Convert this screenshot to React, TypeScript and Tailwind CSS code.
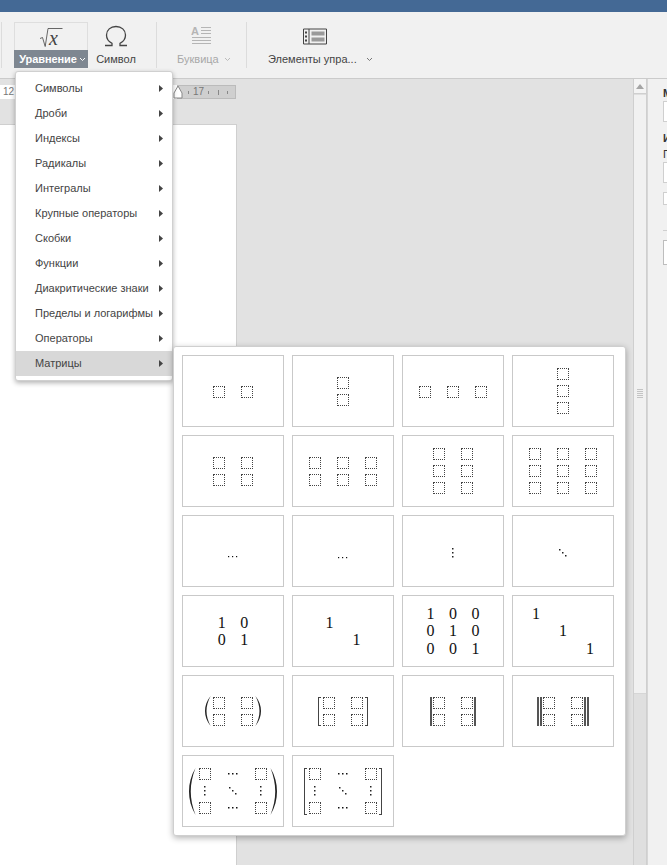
import type { ReactNode } from 'react';

const menuItems = [
  'Символы',
  'Дроби',
  'Индексы',
  'Радикалы',
  'Интегралы',
  'Крупные операторы',
  'Скобки',
  'Функции',
  'Диакритические знаки',
  'Пределы и логарифмы',
  'Операторы',
  'Матрицы',
];

// dotted box that stands in for an empty matrix slot
function Ph() {
  return <span className="block w-3 h-3 border border-dotted border-[#444]" />;
}

function Chevron({ color = '#777' }: { color?: string }) {
  return (
    <svg width="7" height="5" viewBox="0 0 7 5" fill="none" className="shrink-0">
      <path d="M1 1l2.5 2.5L6 1" stroke={color} strokeWidth="1" />
    </svg>
  );
}

function DotsH({ small }: { small?: boolean }) {
  const s = small ? 1.2 : 1.5;
  return (
    <svg width="12" height="12" viewBox="0 0 12 12" className="block" fill="#111">
      <rect x="1" y="5" width={s} height={s} />
      <rect x="5" y="5" width={s} height={s} />
      <rect x="9" y="5" width={s} height={s} />
    </svg>
  );
}

function DotsV() {
  return (
    <svg width="12" height="12" viewBox="0 0 12 12" className="block" fill="#222">
      <rect x="5" y="1" width="1.5" height="1.5" />
      <rect x="5" y="5" width="1.5" height="1.5" />
      <rect x="5" y="9" width="1.5" height="1.5" />
    </svg>
  );
}

function DotsD() {
  return (
    <svg width="12" height="12" viewBox="0 0 12 12" className="block" fill="#222">
      <rect x="2" y="2" width="1.5" height="1.5" />
      <rect x="5" y="5" width="1.5" height="1.5" />
      <rect x="8" y="8" width="1.5" height="1.5" />
    </svg>
  );
}

function PhGrid({ cols, rows }: { cols: number; rows: number }) {
  const cells = Array.from({ length: cols * rows });
  return (
    <div
      className={
        cols === 1
          ? 'grid grid-cols-1 gap-y-[5px]'
          : cols === 2
            ? 'grid grid-cols-2 gap-x-4 gap-y-[5px]'
            : 'grid grid-cols-3 gap-x-4 gap-y-[5px]'
      }
    >
      {cells.map((_, i) => (
        <Ph key={i} />
      ))}
    </div>
  );
}

// 3x3 matrix with dots between the corners
function DotsGrid() {
  return (
    <div className="grid grid-cols-3 gap-x-4 gap-y-[5px]">
      <Ph />
      <DotsH />
      <Ph />
      <DotsV />
      <DotsD />
      <DotsV />
      <Ph />
      <DotsH />
      <Ph />
    </div>
  );
}

function Digits({ rows, wide }: { rows: string[][]; wide?: boolean }) {
  return (
    <div className="font-['Liberation_Serif',serif] text-base text-[#111]">
      {rows.map((row, i) => (
        <div key={i} className="flex h-[17.5px] leading-[17.5px]">
          {row.map((d, j) => (
            <span key={j} className={wide ? 'w-[27px] text-center' : 'w-[22.5px] text-center'}>
              {d}
            </span>
          ))}
        </div>
      ))}
    </div>
  );
}

function Paren({ tall, right }: { tall?: boolean; right?: boolean }) {
  return (
    <svg
      width={tall ? 7 : 6}
      height={tall ? 47 : 30}
      viewBox="0 0 6 30"
      preserveAspectRatio="none"
      className={right ? 'block -scale-x-100' : 'block'}
      fill="#222"
    >
      <path d="M5.6 0C1.6 5 0 10 0 15s1.6 10 5.6 15C3 25 1.5 20 1.5 15S3 5 5.6 0z" />
    </svg>
  );
}

function Bracket({ tall, right }: { tall?: boolean; right?: boolean }) {
  const h = tall ? 'h-[47px]' : 'h-[29px]';
  return right ? (
    <span className={`block w-[3px] ${h} border-y border-r-[1.5px] border-[#444]`} />
  ) : (
    <span className={`block w-[3px] ${h} border-y border-l-[1.5px] border-[#444]`} />
  );
}

function Bar() {
  return <span className="block w-[2px] h-[29px] bg-[#555]" />;
}

function Cell({ children }: { children?: ReactNode }) {
  return (
    <div className="flex items-center justify-center bg-white border border-[#c9c9c9]">
      {children}
    </div>
  );
}

function MatrixPopover() {
  return (
    <div className="absolute left-[173px] top-[346px] w-[453px] h-[490px] bg-white border border-[#cfcfcf] rounded-[3px] shadow-[0_2px_6px_rgba(0,0,0,0.3)] p-2 grid grid-cols-[repeat(4,102px)] auto-rows-[72px] gap-2">
      <Cell><div className="pt-px"><PhGrid cols={2} rows={1} /></div></Cell>
      <Cell><PhGrid cols={1} rows={2} /></Cell>
      <Cell><div className="pt-px"><PhGrid cols={3} rows={1} /></div></Cell>
      <Cell><PhGrid cols={1} rows={3} /></Cell>

      <Cell><PhGrid cols={2} rows={2} /></Cell>
      <Cell><PhGrid cols={3} rows={2} /></Cell>
      <Cell><PhGrid cols={2} rows={3} /></Cell>
      <Cell><PhGrid cols={3} rows={3} /></Cell>

      <Cell><div className="pt-[12px]"><DotsH small /></div></Cell>
      <Cell><div className="pt-[14px]"><DotsH small /></div></Cell>
      <Cell><div className="pt-[3px]"><DotsV /></div></Cell>
      <Cell><div className="pt-[3px]"><DotsD /></div></Cell>

      <Cell><Digits rows={[['1', '0'], ['0', '1']]} /></Cell>
      <Cell><Digits wide rows={[['1', ''], ['', '1']]} /></Cell>
      <Cell><Digits rows={[['1', '0', '0'], ['0', '1', '0'], ['0', '0', '1']]} /></Cell>
      <Cell><Digits wide rows={[['1', '', ''], ['', '1', ''], ['', '', '1']]} /></Cell>

      <Cell>
        <div className="flex items-center gap-[2px]">
          <Paren />
          <PhGrid cols={2} rows={2} />
          <Paren right />
        </div>
      </Cell>
      <Cell>
        <div className="flex items-center gap-[2px]">
          <Bracket />
          <PhGrid cols={2} rows={2} />
          <Bracket right />
        </div>
      </Cell>
      <Cell>
        <div className="flex items-center gap-[1px]">
          <Bar />
          <PhGrid cols={2} rows={2} />
          <Bar />
        </div>
      </Cell>
      <Cell>
        <div className="flex items-center gap-[1px]">
          <div className="flex gap-px"><Bar /><Bar /></div>
          <PhGrid cols={2} rows={2} />
          <div className="flex gap-px"><Bar /><Bar /></div>
        </div>
      </Cell>

      <Cell>
        <div className="flex items-center gap-[3px]">
          <Paren tall />
          <DotsGrid />
          <Paren tall right />
        </div>
      </Cell>
      <Cell>
        <div className="flex items-center gap-[2px]">
          <Bracket tall />
          <DotsGrid />
          <Bracket tall right />
        </div>
      </Cell>
    </div>
  );
}

function EquationMenu() {
  return (
    <div className="absolute left-[15px] top-[71px] w-[158px] h-[310px] bg-white border border-[#d0d0d0] rounded-[3px] shadow-[0_2px_5px_rgba(0,0,0,0.3)] py-1">
      {menuItems.map((item) => (
        <div
          key={item}
          className={
            item === 'Матрицы'
              ? 'flex items-center justify-between h-[25px] pl-[19px] pr-[9px] bg-[#d8d8d8]'
              : 'flex items-center justify-between h-[25px] pl-[19px] pr-[9px]'
          }
        >
          <span className="whitespace-nowrap">{item}</span>
          <svg width="4" height="7" viewBox="0 0 4 7" className="shrink-0" fill="#444">
            <path d="M0 0l4 3.5L0 7z" />
          </svg>
        </div>
      ))}
    </div>
  );
}

function Divider() {
  return <div className="w-px h-[46px] bg-[#dcdcdc] shrink-0" />;
}

function Toolbar() {
  return (
    <div className="flex items-start h-[67px] pt-[10px] bg-[#f1f1f1] border-b border-[#cbcbcb] shrink-0">
      <div className="ml-px"><Divider /></div>

      {/* equation button, shown as open */}
      <div className="ml-3 w-[74px] shrink-0">
        <div className="flex items-center justify-center h-[28px] border border-b-0 border-[#dedede]">
          <svg width="24" height="22" viewBox="0 0 24 22" fill="none">
            <path d="M1 12.5l2.5-1 2.7 9L9 2.5h14.5" stroke="#444" strokeWidth="0.8" />
            <text x="10" y="19" fontFamily="Liberation Serif" fontStyle="italic" fontSize="20" fill="#444">x</text>
          </svg>
        </div>
        <div className="flex items-center justify-center gap-[2px] h-[18px] pl-[3px] bg-[#7e8791] text-white font-bold tracking-[-0.1px]">
          <span>Уравнение</span>
          <Chevron color="#fff" />
        </div>
      </div>

      <div className="w-[56px] ml-0 shrink-0">
        <div className="flex items-center justify-center h-[28px]">
          <svg width="24" height="22" viewBox="0 0 24 22" fill="none">
            <path
              d="M1 20.5h7v-2.2C4.6 16.6 2.5 13.5 2.5 10 2.5 5 6.5 1.5 12 1.5S21.5 5 21.5 10c0 3.5-2.1 6.6-5.5 8.3v2.2h7"
              stroke="#444"
              strokeWidth="1.3"
            />
          </svg>
        </div>
        <div className="flex items-center justify-center h-[18px]">Символ</div>
      </div>

      <div className="ml-[12px]"><Divider /></div>

      {/* drop cap is disabled here */}
      <div className="ml-5 w-[54px] shrink-0 text-[#a8a8a8]">
        <div className="flex items-center justify-center h-[28px] pr-[12px] pl-[6px]">
          <svg width="20" height="22" viewBox="0 0 20 22" fill="none" stroke="#b5b5b5" strokeWidth="1" className="shrink-0">
            <text x="0" y="10" fontFamily="Liberation Sans" fontWeight="bold" fontSize="11" fill="#b5b5b5" stroke="none">A</text>
            <path d="M10 2.5h10M10 5.5h10M10 8.5h10M1 12.5h19M1 15.5h19M1 18.5h19" />
          </svg>
        </div>
        <div className="flex items-center gap-[5px] h-[18px] whitespace-nowrap">
          <span>Буквица</span>
          <Chevron color="#bbb" />
        </div>
      </div>

      <div className="ml-[15px]"><Divider /></div>

      <div className="ml-[21px] w-[104px] shrink-0">
        <div className="flex items-center justify-center h-[28px] pr-[10px]">
          <svg width="24" height="17" viewBox="0 0 24 17" fill="none">
            <path d="M.5 1h23v15H.5z" stroke="#444" />
            <path d="M6 1v15" stroke="#444" />
            <path d="M2 3.5h2v2H2zM2 7.5h2v2H2zM2 11.5h2v2H2z" fill="#444" />
            <path d="M8.5 3.5h13v4h-13zM8.5 9.5h13v4h-13z" fill="#9a9a9a" />
          </svg>
        </div>
        <div className="flex items-center gap-[9px] h-[18px] whitespace-nowrap">
          <span>Элементы упра...</span>
          <Chevron />
        </div>
      </div>
    </div>
  );
}

function Ruler() {
  return (
    <div className="flex w-[236px] h-[14px] mt-[6px] text-[10px] text-[#777] leading-[14px]">
      <div className="w-[177px] bg-white pl-[3px]">12</div>
      <div className="relative flex-1 flex items-center bg-[#cfcfcf] border-y border-r border-[#bbb]">
        <svg width="10" height="14" viewBox="0 0 10 14" className="absolute left-[-4px] top-[-1px]" fill="#fff" stroke="#888">
          <path d="M5 1L1 8v5h8V8z" />
        </svg>
        <span className="block w-px h-[3px] bg-[#888] ml-[11px]" />
        <span className="ml-[4px] text-[10px]">17</span>
        <span className="block w-px h-[3px] bg-[#888] ml-[4px]" />
        <span className="block w-px h-[5px] bg-[#888] ml-[9px]" />
        <span className="block w-px h-[3px] bg-[#888] ml-[8px]" />
      </div>
    </div>
  );
}

function Scrollbar() {
  return (
    <div className="flex flex-col w-[14px] shrink-0 bg-[#dfdfdf] border-x border-[#cfcfcf]">
      <div className="flex items-center justify-center h-[15px] bg-[#f4f4f4] border-b border-[#cfcfcf] shrink-0">
        <svg width="8" height="5" viewBox="0 0 8 5" fill="#a5a5a5">
          <path d="M4 0l4 5H0z" />
        </svg>
      </div>
      <div className="flex flex-col items-center justify-center gap-px h-[599px] mt-px bg-[#f1f1f1] border-b border-[#d6d6d6] shrink-0 pb-[2px]">
        {Array.from({ length: 5 }).map((_, i) => (
          <span key={i} className="block w-[6px] h-px bg-[#c4c4c4]" />
        ))}
      </div>
    </div>
  );
}

function SidePanel() {
  return (
    <div className="flex-1 min-w-0 bg-[#f1f1f1] border-l border-[#d6d6d6] pl-[15px] pt-[7px] overflow-hidden font-bold text-[#333]">
      <div className="h-[14px] leading-[14px]">М</div>
      <div className="w-[60px] h-[21px] mt-px bg-white border border-[#cfcfcf]" />
      <div className="h-[14px] leading-[14px] mt-[9px]">И</div>
      <div className="h-[14px] leading-[14px] mt-[2px] font-normal">П</div>
      <div className="w-[60px] h-[21px] mt-px bg-white border border-[#cfcfcf]" />
      <div className="w-[60px] h-[13px] mt-[9px] bg-white border border-[#cfcfcf]" />
      <div className="w-[60px] h-px mt-[25px] bg-[#cfcfcf]" />
      <div className="w-[60px] h-[25px] mt-[9px] bg-white border border-[#bdbdbd]" />
    </div>
  );
}

export default function App() {
  return (
    <div className="relative flex flex-col w-[667px] h-[865px] overflow-hidden bg-[#e2e2e2] font-['Liberation_Sans',Arial,sans-serif] text-[11px] text-[#444]">
      <div className="h-3 bg-[#446995] shrink-0" />
      <Toolbar />

      <div className="flex flex-1 min-h-0">
        <div className="w-[633px] shrink-0 flex flex-col bg-[#e2e2e2]">
          <Ruler />
          <div className="w-[237px] flex-1 mt-[25px] bg-white border-r border-t border-[#cfcfcf]" />
        </div>
        <Scrollbar />
        <SidePanel />
      </div>

      <EquationMenu />
      <MatrixPopover />
    </div>
  );
}
